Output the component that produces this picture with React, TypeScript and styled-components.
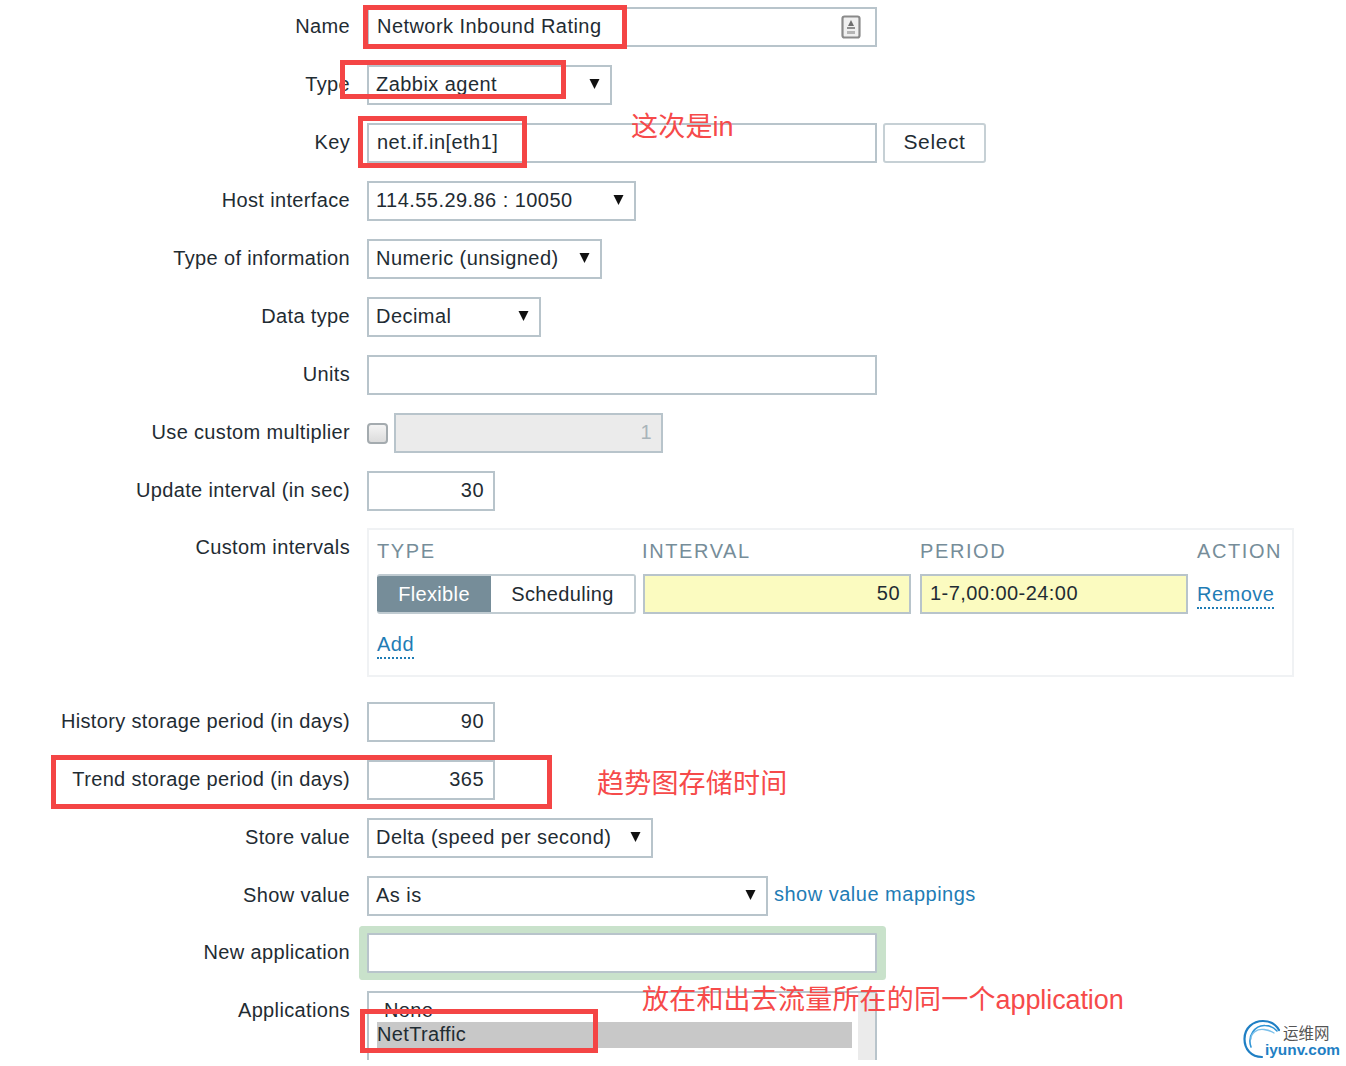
import styled, { createGlobalStyle } from 'styled-components';

const GlobalStyle = createGlobalStyle`
    html, body {
        margin: 0;
        padding: 0;
        background: #fff;
    }
    body {
        font-family: "Liberation Sans", Arial, sans-serif;
        font-size: 20px;
        letter-spacing: 0.35px;
        color: #1f2c33;
    }
`;

const Page = styled.div`
    position: relative;
    width: 1346px;
    height: 1066px;
    overflow: hidden;
    padding-top: 7px;
    box-sizing: border-box;
`;

const Row = styled.div<{ $gap?: number }>`
    display: flex;
    align-items: center;
    min-height: 40px;
    margin-bottom: ${({ $gap }) => $gap ?? 18}px;
`;

const TopRow = styled(Row)`
    align-items: flex-start;
`;

const Label = styled.label<{ $top?: boolean }>`
    flex: 0 0 350px;
    margin-right: 17px;
    padding-bottom: ${({ $top }) => ($top ? 0 : 2)}px;
    text-align: right;
    white-space: nowrap;
    line-height: ${({ $top }) => ($top ? '39px' : 'normal')};
`;

const Field = styled.div<{ $width: number; $align?: string; $bg?: string; $color?: string }>`
    display: flex;
    align-items: center;
    justify-content: ${({ $align }) => ($align === 'right' ? 'flex-end' : 'space-between')};
    box-sizing: border-box;
    width: ${({ $width }) => $width}px;
    height: 40px;
    padding: 0 9px 2px 8px;
    border: 2px solid #b8c4cb;
    background: ${({ $bg }) => $bg ?? '#fff'};
    color: ${({ $color }) => $color ?? 'inherit'};
    letter-spacing: 0.45px;
    white-space: nowrap;
`;

const Dropdown = styled(Field)`
    padding: 0 10px 2px 7px;
`;

const CellField = styled(Field)`
    margin-left: 1px;
`;

const Arrow = styled.svg`
    width: 11px;
    height: 10px;
    flex: none;
`;

const Button = styled.div`
    display: flex;
    align-items: center;
    justify-content: center;
    box-sizing: border-box;
    width: 103px;
    height: 40px;
    margin-left: 6px;
    padding-bottom: 2px;
    border: 2px solid #c6d0d5;
    border-radius: 3px;
    font-size: 21px;
    letter-spacing: 0.6px;
`;

const Checkbox = styled.div`
    box-sizing: border-box;
    width: 21px;
    height: 21px;
    margin-right: 6px;
    border: 2px solid #a4abaf;
    border-radius: 4px;
    background: linear-gradient(#f4f4f4, #dcdcdc);
`;

const LinkText = styled.a<{ $dotted?: boolean }>`
    color: #1f7cb5;
    text-decoration: none;
    letter-spacing: 0.5px;
    padding-bottom: 2px;
    border-bottom: ${({ $dotted }) => ($dotted ? '2px dotted #1f7cb5' : 'none')};
`;

const MappingsLink = styled(LinkText)`
    margin: 0 0 2px 6px;
`;

const IntervalsBox = styled.div`
    box-sizing: border-box;
    width: 927px;
    height: 149px;
    padding: 9px 8px 0;
    border: 2px solid #f0f2f4;
`;

const IntervalsGrid = styled.div`
    display: grid;
    grid-template-columns: 265px 278px 277px 1fr;
    grid-template-rows: 24px 40px;
    row-gap: 11px;
    align-items: center;
`;

const Heading = styled.div`
    color: #768d99;
    letter-spacing: 1.6px;
    white-space: nowrap;
`;

const Segments = styled.div`
    display: flex;
    box-sizing: border-box;
    width: 259px;
    height: 40px;
    border: 2px solid #c0cbd1;
    border-left: none;
    border-radius: 3px;
    overflow: hidden;
`;

const Segment = styled.div<{ $active?: boolean }>`
    display: flex;
    align-items: center;
    justify-content: center;
    flex: ${({ $active }) => ($active ? '0 0 114px' : '1')};
    background: ${({ $active }) => ($active ? '#768d99' : '#fff')};
    color: ${({ $active }) => ($active ? '#fff' : 'inherit')};
`;

const AddRow = styled.div`
    margin-top: 19px;
`;

const HighlightedField = styled(Field)`
    box-shadow: 0 0 0 7px #c9e2cb, 2px 0 0 7px #c9e2cb, -1px 0 0 7px #c9e2cb;
    border-radius: 1px;
`;

const ListBox = styled.div`
    position: relative;
    box-sizing: border-box;
    width: 510px;
    height: 69px;
    padding-top: 6px;
    border: 2px solid #b8c4cb;
    border-bottom: none;
    overflow: hidden;
`;

const ListItem = styled.div<{ $selected?: boolean }>`
    display: flex;
    align-items: center;
    width: 475px;
    height: ${({ $selected }) => ($selected ? 26 : 23)}px;
    margin-left: ${({ $selected }) => ($selected ? 8 : 0)}px;
    padding-left: ${({ $selected }) => ($selected ? 0 : 15)}px;
    padding-bottom: ${({ $selected }) => ($selected ? 2 : 0)}px;
    box-sizing: border-box;
    background: ${({ $selected }) => ($selected ? '#c8c8c8' : 'transparent')};
`;

const ScrollTrack = styled.div`
    position: absolute;
    top: 0;
    right: 0;
    width: 17px;
    height: 100%;
    background: #ebebeb;
`;

const NameIcon = styled.svg`
    width: 20px;
    height: 24px;
    flex: none;
    margin: 2px 5px 0 0;
`;

const RedFrame = styled.div<{ $x: number; $y: number; $w: number; $h: number }>`
    position: absolute;
    left: ${({ $x }) => $x}px;
    top: ${({ $y }) => $y}px;
    width: ${({ $w }) => $w}px;
    height: ${({ $h }) => $h}px;
    box-sizing: border-box;
    border: 5px solid #f44545;
`;

const Note = styled.div<{ $x: number; $y: number }>`
    position: absolute;
    left: ${({ $x }) => $x}px;
    top: ${({ $y }) => $y}px;
    font-family: "Liberation Sans", "Noto Sans CJK SC", sans-serif;
    font-size: 27px;
    line-height: 36px;
    letter-spacing: 0.2px;
    color: #f64a4a;
    white-space: nowrap;
`;

const NoteLatin = styled.span`
    letter-spacing: -0.1px;
`;

const Watermark = styled.div`
    position: absolute;
    left: 1243px;
    top: 1019px;
    width: 100px;
    height: 40px;
`;

const WatermarkArc = styled.svg`
    position: absolute;
    left: 0;
    top: 0;
    width: 40px;
    height: 40px;
`;

const WatermarkCn = styled.div`
    position: absolute;
    left: 40px;
    top: 3px;
    font-family: "Noto Sans CJK SC", sans-serif;
    font-size: 15.5px;
    line-height: 20px;
    letter-spacing: 0;
    color: #555;
`;

const WatermarkEn = styled.div`
    position: absolute;
    left: 22px;
    top: 22px;
    font-size: 15.4px;
    line-height: 18px;
    font-weight: bold;
    letter-spacing: 0;
    color: #1f7fc4;
`;

const SelectField = ({ width, value }: { width: number; value: string }) => (
    <Dropdown $width={width}>
        <span>{value}</span>
        <Arrow viewBox="0 0 11 10">
            <polygon points="0.5,0 10.5,0 5.5,10" fill="#111" />
        </Arrow>
    </Dropdown>
);

const App = () => {
    return (
        <Page>
            <GlobalStyle />

            <Row>
                <Label>Name</Label>
                <Field $width={510}>
                    <span>Network Inbound Rating</span>
                    <NameIcon viewBox="0 0 20 24">
                        <rect x="1.5" y="1.5" width="17" height="21" rx="2" fill="#f0f0f0" stroke="#8a8a8a" strokeWidth="2.2" />
                        <polygon points="10,5 13,11 7,11" fill="#6f6f6f" />
                        <rect x="6" y="12" width="8" height="2" fill="#8f8f8f" />
                        <rect x="6" y="16" width="8" height="3" fill="#b5b5b5" />
                    </NameIcon>
                </Field>
            </Row>
            <Row>
                <Label>Type</Label>
                <SelectField width={245} value="Zabbix agent" />
            </Row>
            <Row>
                <Label>Key</Label>
                <Field $width={510}>net.if.in[eth1]</Field>
                <Button>Select</Button>
            </Row>
            <Row>
                <Label>Host interface</Label>
                <SelectField width={269} value="114.55.29.86 : 10050" />
            </Row>
            <Row>
                <Label>Type of information</Label>
                <SelectField width={235} value="Numeric (unsigned)" />
            </Row>
            <Row>
                <Label>Data type</Label>
                <SelectField width={174} value="Decimal" />
            </Row>
            <Row>
                <Label>Units</Label>
                <Field $width={510} />
            </Row>
            <Row>
                <Label>Use custom multiplier</Label>
                <Checkbox />
                <Field $width={269} $align="right" $bg="#ebebeb" $color="#a9b4ba">1</Field>
            </Row>
            <Row $gap={17}>
                <Label>Update interval (in sec)</Label>
                <Field $width={128} $align="right">30</Field>
            </Row>

            <TopRow $gap={25}>
                <Label $top>Custom intervals</Label>
                <IntervalsBox>
                    <IntervalsGrid>
                        <Heading>TYPE</Heading>
                        <Heading>INTERVAL</Heading>
                        <Heading>PERIOD</Heading>
                        <Heading>ACTION</Heading>
                        <Segments>
                            <Segment $active>Flexible</Segment>
                            <Segment>Scheduling</Segment>
                        </Segments>
                        <CellField $width={268} $align="right" $bg="#fbfbc0">50</CellField>
                        <Field $width={268} $bg="#fbfbc0">1-7,00:00-24:00</Field>
                        <div>
                            <LinkText $dotted>Remove</LinkText>
                        </div>
                    </IntervalsGrid>
                    <AddRow>
                        <LinkText $dotted>Add</LinkText>
                    </AddRow>
                </IntervalsBox>
            </TopRow>

            <Row>
                <Label>History storage period (in days)</Label>
                <Field $width={128} $align="right">90</Field>
            </Row>
            <Row>
                <Label>Trend storage period (in days)</Label>
                <Field $width={128} $align="right">365</Field>
            </Row>
            <Row>
                <Label>Store value</Label>
                <SelectField width={286} value="Delta (speed per second)" />
            </Row>
            <Row $gap={17}>
                <Label>Show value</Label>
                <SelectField width={401} value="As is" />
                <MappingsLink>show value mappings</MappingsLink>
            </Row>
            <Row>
                <Label>New application</Label>
                <HighlightedField $width={510} />
            </Row>
            <TopRow>
                <Label $top>Applications</Label>
                <ListBox>
                    <ScrollTrack />
                    <ListItem>None</ListItem>
                    <ListItem $selected>NetTraffic</ListItem>
                </ListBox>
            </TopRow>

            <RedFrame $x={363} $y={5} $w={264} $h={44} />
            <RedFrame $x={340} $y={60} $w={226} $h={39} />
            <RedFrame $x={358} $y={116} $w={169} $h={52} />
            <RedFrame $x={51} $y={755} $w={501} $h={54} />
            <RedFrame $x={360} $y={1009} $w={238} $h={44} />

            <Note $x={631} $y={109}>这次是<NoteLatin>in</NoteLatin></Note>
            <Note $x={597} $y={766}>趋势图存储时间</Note>
            <Note $x={642} $y={982}>放在和出去流量所在的同一个<NoteLatin>application</NoteLatin></Note>

            <Watermark>
                <WatermarkArc viewBox="0 0 40 40" fill="none" strokeLinecap="round">
                    <path d="M19 38 C8 38 1.5 30 1.5 20 C1.5 9 10 2 20 2 C27 2 33 6 36 11" stroke="#1f7fc4" strokeWidth="2.2" />
                    <path d="M8 28 C4 17 12 6 22 6.5 C27 6.5 31 8.5 34 12" stroke="#2f95d6" strokeWidth="1.6" />
                    <path d="M8 20 C8 14 14 9.5 21 10.5 C25 11 28 12 31 14" stroke="#7cc0ea" strokeWidth="1.3" />
                </WatermarkArc>
                <WatermarkCn>运维网</WatermarkCn>
                <WatermarkEn>iyunv.com</WatermarkEn>
            </Watermark>
        </Page>
    );
};

export default App;
